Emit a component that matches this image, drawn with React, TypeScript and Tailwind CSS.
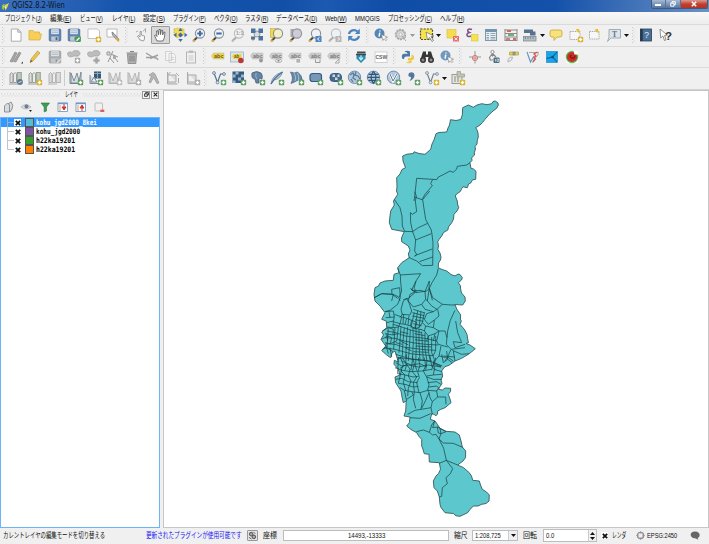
import React, { useLayoutEffect, useRef, useState } from 'react';

/* Text squeezed or stretched to the width of its box */
function Fit({ className, children }: { className: string; children: React.ReactNode }) {
  const box = useRef<HTMLSpanElement>(null);
  const inner = useRef<HTMLSpanElement>(null);
  const [k, setK] = useState(1);
  useLayoutEffect(() => {
    if (box.current && inner.current && inner.current.offsetWidth) {
      setK(box.current.getBoundingClientRect().width / inner.current.offsetWidth);
    }
  }, []);
  return (
    <span ref={box} className={`block shrink-0 whitespace-nowrap ${className}`}>
      <span ref={inner} className="inline-block origin-left" style={{ transform: `scaleX(${k})` }}>
        {children}
      </span>
    </span>
  );
}

const Plus = ({ c = '#5a9c5f', x = 12.5, y = 12.5 }: { c?: string; x?: number; y?: number }) => (
  <g>
    <rect x={x - 2.7} y={y - 2.7} width="5.4" height="5.4" rx="1" fill={c} />
    <path d={`M${x - 1.7} ${y}h3.4M${x} ${y - 1.7}v3.4`} stroke="#fff" strokeWidth="1.3" />
  </g>
);
const YPlus = () => <Plus c="#d9b32c" />;
const Lens = ({ fill = '#eef2f6', stroke = '#8b8f94', handle = '#4a4a48', tip = '#e0a93a' }) => (
  <g>
    <path d="M6 10.5L2.4 14" stroke={handle} strokeWidth="2" />
    <path d="M3.6 12.8L1.8 14.5" stroke={tip} strokeWidth="1.8" />
    <circle cx="9" cy="6.5" r="4.6" fill={fill} stroke={stroke} strokeWidth="1.1" />
  </g>
);
const Floppy = ({ a = '#5c84b4', b = '#47698f' }) => (
  <g>
    <rect x="2.2" y="2" width="11.6" height="12" rx="1" fill={a} stroke={b} strokeWidth=".7" />
    <rect x="4.2" y="2.2" width="7.6" height="5" fill="#dce4ec" />
    <path d="M5 3.8h6M5 5.5h6" stroke="#93a8bd" strokeWidth=".6" />
    <rect x="4.2" y="9.4" width="7.4" height="4.4" fill="#c2c7cb" />
    <rect x="8.6" y="10.2" width="1.8" height="3" fill={b} />
  </g>
);
const Blob = () => <path d="M2 6.500c-1.500-3 1-4.500 4-3c1-1.500 2-2 5-1.800c3.500 .3 4 4 1 5.300c-2 .6-3-.4-4 0s-4 2-6-.5z" fill="#bdbdbd" stroke="#a2a2a2" strokeWidth=".8" />;
const Tag = ({ fill = '#cdcdcd', ink = '#777', children }: { fill?: string; ink?: string; children?: React.ReactNode }) => (
  <g>
    <path d="M1.500 7l2-3h10.500v6H3.500z" fill={fill} stroke="#b5b5b5" strokeWidth=".5" />
    <text x="4" y="9" fontSize="5.5" fontWeight="bold" fill={ink} fontFamily="Liberation Sans, sans-serif">abc</text>
    {children}
  </g>
);
const Globe = ({ inner }: { inner?: React.ReactNode }) => (
  <g>
    <circle cx="7.5" cy="7.300" r="6.200" fill="#b4c8da" stroke="#6487a8" strokeWidth=".9" />
    {inner}
    <Plus />
  </g>
);
const Books = ({ c = '#9a9f9a', f = '#bccabb' }) => (
  <g stroke={c} strokeWidth="1">
    <path d="M2 4l1.500-1.500l1.500 1.500v8.500h-3z" fill="#ddd" />
    <path d="M5.600 4l1.400-1.500l1.500 1.500v8.500h-3z" fill="#eee" />
    <rect x="9.300" y="2.500" width="4" height="10" fill={f} />
    <path d="M1 14h9" />
  </g>
);
const Vee = ({ c = '#50718f' }: { c?: string }) => (
  <g>
    <path d="M3 3l3.500 9.500l3-8.500h4" fill="none" stroke={c} strokeWidth="1.200" />
    <circle cx="3" cy="3" r="1.400" fill="#eee" stroke={c} strokeWidth=".8" />
    <circle cx="6.500" cy="12.500" r="1.400" fill="#eee" stroke={c} strokeWidth=".8" />
    <circle cx="13" cy="4" r="1.400" fill="#eee" stroke={c} strokeWidth=".8" />
  </g>
);
const Mesh = ({ c = '#a8a8a8', f = '#ddd' }) => (
  <g>
    <path d="M2 2v11.500h11" fill="none" stroke={c} strokeWidth="1" />
    <path d="M3 3l3 8l3-8l2 8l2-9v11H3z" fill={f} stroke={c} strokeWidth=".9" />
  </g>
);
const Info = ({ c = '#5587b6' }) => (
  <g>
    <circle cx="6.500" cy="6.500" r="5" fill={c} />
    <path d="M6.800 5.600l-.7 4M6.900 3.400v1.200" stroke="#fff" strokeWidth="1.500" />
    <path d="M8.500 7.500l1.300 6l1.300-1.800l1.800 2l1-1l-1.700-1.800l2.300-.7z" fill="#fff" stroke="#777" strokeWidth=".6" />
  </g>
);
const Gear = ({ c = '#aaa' }) => (
  <g>
    <circle cx="7.500" cy="7.500" r="4.900" fill="#ddd" stroke={c} strokeWidth="1.600" strokeDasharray="2.2 .8" />
    <circle cx="7.500" cy="7.500" r="4" fill="none" stroke={c} strokeWidth=".8" />
    <circle cx="7.500" cy="7.500" r="1.700" fill="#f4f4f4" stroke={c} strokeWidth=".8" />
  </g>
);

const icons: Record<string, React.ReactNode> = {
  new: <path d="M3.300 2h6.500l3.200 3.200v9H3.300zM9.800 2v3.200H13" fill="#fff" stroke="#8e8e8e" strokeWidth=".7" />,
  open: <path d="M2 13V3.500h4l1 1.500h5.500v2h2l-1.500 6z" fill="#f6cf57" stroke="#d9a93a" strokeWidth=".7" />,
  save: <Floppy />,
  saveAs: <g><Floppy /><rect x="9.300" y="9.300" width="5.600" height="5.600" rx="1" fill="#4d9b5e" /><path d="M10.500 13.800l3-3" stroke="#fff" strokeWidth="1.300" /></g>,
  composer: <g><path d="M2 2h9.500l2 2v7.500H2z" fill="#fff" stroke="#aaa" strokeWidth=".7" /><YPlus /></g>,
  manager: <g><path d="M2 2h10v8H2z" fill="#fff" stroke="#aaa" strokeWidth=".8" /><path d="M7 5l.5 3l5 5.500l1.500-1l-5-6z" fill="#b8b8b8" stroke="#666" strokeWidth=".7" /><path d="M11 11.500l3 2.800" stroke="#dfb032" strokeWidth="1.800" /></g>,
  touch: <g><path d="M7 13L4.500 9l1-.5L7 10V4.500h1.300V8l3.200 1v3l-1 2z" fill="#f6f6f6" stroke="#8c8c8c" strokeWidth=".8" /><path d="M10 4.500l2.500-3v4M3 5l2-1" stroke="#999" strokeWidth=".8" fill="none" /></g>,
  hand: <path d="M5 14L2.500 8.500l1.200-.6L5 9.500L4.500 4l1.300-.3l.8 4L7 2.500h1.400L8.500 7.500l.9-4.300h1.300L10.600 8l1.200-2.800h1.200l-.6 5.500L11 14z" fill="#fff" stroke="#555" strokeWidth=".8" />,
  panSel: <g><path d="M2 2l4-1l6 1v6l-7 3l-3-3z" fill="#f4dc55" stroke="#b5a13d" strokeWidth=".7" strokeDasharray="1.500 1" /><g fill="#416ba0"><path d="M8.500 1l2.200 3H6.300zM8.500 15l2.200-3H6.300zM1.500 8l3-2.200v4.400zM15.500 8l-3-2.200v4.400z" /><path d="M8.500 5.500l2.500 2.500l-2.500 2.500l-2.500-2.500z" /></g></g>,
  zoomIn: <g><Lens /><path d="M9 3.800v5.400M6.300 6.500h5.400" stroke="#3f6fa8" strokeWidth="2" /></g>,
  zoomOut: <g><Lens /><path d="M6.300 6.500h5.400" stroke="#3f6fa8" strokeWidth="2" /></g>,
  zoomNative: <g><Lens stroke="#bbb" handle="#aaa" tip="#bbb" /><text x="6" y="8.300" fontSize="5" fontWeight="bold" fill="#999" fontFamily="Liberation Sans, sans-serif">1:1</text></g>,
  zoomFull: <g><circle cx="8" cy="7" r="3" fill="#d7dce0" stroke="#999" /><path d="M6 10l-2.500 3.500" stroke="#d8a43a" strokeWidth="1.500" /><g fill="#4b739f"><rect x="2" y="1.500" width="4.500" height="4.500" /><rect x="9.500" y="1.500" width="4.500" height="4.500" /><rect x="2" y="9.500" width="4" height="3" /><rect x="9.500" y="9" width="4.500" height="4.500" /></g></g>,
  zoomSel: <g><rect x="1.500" y="1.500" width="7" height="9" fill="#f2da4a" stroke="#b19d38" strokeWidth=".5" /><Lens fill="#f3efc7" /></g>,
  zoomLayer: <g><rect x="2.500" y="2" width="10" height="8" fill="#a9a9ad" /><Lens fill="#d0cad6" stroke="#929299" /></g>,
  zoomLast: <g><Lens /><rect x="8.500" y="9" width="6" height="6" fill="#4f83bd" /><path d="M12.500 10.300L10.500 12l2 1.700" fill="none" stroke="#fff" /></g>,
  zoomNext: <g><Lens stroke="#bbb" handle="#aaa" tip="#bbb" /><rect x="8.500" y="9" width="6" height="6" fill="#b5b5b5" /><path d="M10.700 10.300L12.700 12l-2 1.700" fill="none" stroke="#fff" /></g>,
  refresh: <g fill="none" stroke="#4d84bf" strokeWidth="2.200"><path d="M3 7a5 4.500 0 0 1 8.500-2.500M13 9a5 4.500 0 0 1-8.500 2.500" /><path d="M13.800 1.500v5.500H9zM2.200 14.500V9H7z" fill="#4d84bf" stroke="none" /></g>,
  info: <Info />,
  infoFaint: <Info c="#6f99bf" />,
  action: <g><Gear /><path d="M9 9l4 5M10 12l3-2" stroke="#aaa" strokeWidth="1" /></g>,
  select: <g><rect x="1.500" y="2" width="12" height="10.500" fill="#f8e34d" stroke="#4e4a30" strokeWidth="1.200" strokeDasharray="2 1.200" /><path d="M7 5l1.500 8l2-2.500l2.500 4l1.500-1l-2.500-3.800l2.800-.7z" fill="#f5f5f5" stroke="#555" strokeWidth=".6" /></g>,
  deselect: <g><rect x="2" y="2.500" width="9" height="8.500" fill="#f6dd4e" stroke="#d8bd46" strokeWidth=".6" /><rect x="8" y="9" width="6" height="5.500" fill="#e96a66" /><path d="M9.500 10.300l3 3M12.500 10.300l-3 3" stroke="#fff" /></g>,
  expr: <g><path d="M8 2.500c-4-1.500-6 1.300-2.500 3c-4.500 1-2.500 5.500 1.500 3.500" fill="none" stroke="#7d5386" strokeWidth="1.500" /><rect x="7.500" y="7.500" width="6.500" height="6.500" fill="#f6e345" stroke="#d0bd3f" strokeWidth=".5" /></g>,
  table: <g><rect x="2.500" y="2.500" width="11" height="11" fill="#e9eef2" stroke="#7f99af" /><rect x="2.500" y="2.500" width="11" height="2.500" fill="#7594ae" /><path d="M3.500 6.500h2.500M3.500 8.500h2.500M3.500 10.500h2.500M3.500 12h2.500M7.500 6.500h5M7.500 8.500h5M7.500 10.500h5M7.500 12h5" stroke="#8fa6b9" /></g>,
  calc: <g><path d="M2 2v12M14 2v12M2 3h12M2 6.500h12M2 10h12M2 13.500h12" stroke="#8b8b8b" /><path d="M4 4h4M10 12h3" stroke="#d46a65" strokeWidth="2" /><path d="M5 8h6" stroke="#79ad72" strokeWidth="2" /><path d="M3 12h4" stroke="#d3807a" strokeWidth="2" /></g>,
  measure: <g><path d="M2 2.500h9v2h2.500v4H8V6H2z" fill="#56738d" /><rect x="1.500" y="9.500" width="12.500" height="4.500" fill="#b4bdc3" stroke="#7f8c95" strokeWidth=".8" /><path d="M3.500 10v2M6 10v2M8.500 10v2M11 10v2" stroke="#6b7780" strokeWidth=".7" /></g>,
  tips: <path d="M4 3h8q2 0 2 2v3q0 2-2 2H9l-3 3.500v-3.500H4q-2 0-2-2V5q0-2 2-2z" fill="#f8e27a" stroke="#cda945" strokeWidth=".9" />,
  bmNew: <g><path d="M2 4.500h10v8H2z" fill="#f7f7f7" stroke="#999" strokeWidth=".8" strokeDasharray="1.500 .8" /><path d="M8 2h3l1 4l-3-1z" fill="#e6c039" /><YPlus /></g>,
  bm: <g><path d="M2.500 4.500h9.500v7.500h-9.500z" fill="#f7f7f7" stroke="#999" strokeWidth=".8" strokeDasharray="1.500 .8" /><path d="M8 2h3l1 4l-3-1z" fill="#e6c039" /></g>,
  annot: <g><path d="M3 2.500h11.500v8.500H5l-3.500 3.500L3 10z" fill="#dde5ea" stroke="#8ca0af" strokeWidth=".8" /><text x="6" y="9.500" fontSize="7.500" fontWeight="bold" fill="#68747c" fontFamily="Liberation Serif, serif">T</text></g>,
  help: <g><rect x="2.500" y="2" width="11" height="12" fill="#496f98" stroke="#263f59" strokeWidth=".8" /><path d="M3.500 2v12" stroke="#27374b" strokeWidth="2.500" /><text x="6.300" y="11.300" fontSize="8.500" fill="#e8eef5" fontFamily="Liberation Sans, sans-serif">?</text></g>,
  whats: <g><path d="M2 2l.7 9l2.200-2l1.600 4.500l1.500-.6L6.500 8.500l2.800-.4z" fill="#fff" stroke="#666" strokeWidth=".7" /><text x="7" y="13" fontSize="11.500" fontWeight="bold" fill="#333" fontFamily="Liberation Sans, sans-serif">?</text></g>,

  edits: <g><path d="M2 12.500L7 3l2 1L4.500 13zM5.500 12.500L11 3l2 1L8 13z" fill="#a4a4a4" stroke="#858585" strokeWidth=".6" /><path d="M13 14.500h2v-2z" fill="#333" /></g>,
  pencil: <g><path d="M3 13.500l1-3.500l6.500-8l2.500 2L6 12z" fill="#e8c64c" stroke="#a68e3c" strokeWidth=".6" /><path d="M3 13.800l1-2.800l1.500 1z" fill="#555" /></g>,
  saveOff: <g><Floppy a="#ababab" b="#9a9a9a" /><path d="M10 14l4-4" stroke="#ddd" strokeWidth="1.500" /></g>,
  addF: <g><Blob /><Plus c="#a9a9a9" x={11.500} y={11.500} /></g>,
  moveF: <g><Blob /><path d="M9 8h3v2h2v3h-2v2H9v-2H7v-3h2z" fill="#a6a6a6" stroke="#eee" strokeWidth=".7" /></g>,
  node: <g><path d="M2 3h3v3H2zM8 2l-5 11M6 5l7 3M8 6l5 7M5 9l4 5" stroke="#999" fill="#ddd" /><path d="M8 7h3v3H8z" fill="#aaa" /></g>,
  trash: <g><path d="M3.500 5h9l-.7 9.500H4.200z" fill="#b3b3b3" stroke="#888" strokeWidth=".9" /><path d="M2.500 4h11M6 2.500h4M6 6.500v6M8 6.500v6M10 6.500v6" stroke="#838383" strokeWidth="1.100" fill="none" /></g>,
  cut: <path d="M2 4l8 5M14 6L6 9.500M2 8.500h6M10 8.500q3 0 4 2.500" stroke="#a0a0a0" strokeWidth="1.400" fill="none" />,
  copy: <path d="M2.500 2.500h6v9h-6zM6 4.500h4.500l2 2V13.500H6zM7.500 8.500h3.500M7.500 10.500h3.500" fill="#f3f3f3" stroke="#c9c9c9" strokeWidth=".8" />,
  paste: <g><rect x="3.500" y="3" width="9" height="11" fill="#f0f0f0" stroke="#b5b5b5" /><rect x="6" y="1.500" width="4" height="2.500" fill="#bbb" /><path d="M5.500 7h5M5.500 9h5M5.500 11h5" stroke="#ccc" /></g>,
  abcY: <Tag fill="#f0d442" ink="#6b5d25" />,
  abcPic: <g><rect x="1.500" y="3" width="13" height="10" fill="#dbe5ef" stroke="#92a9be" strokeWidth=".7" /><path d="M3 7.500l1.500-2.500h8v5h-8z" fill="#f0d442" /><text x="5" y="9" fontSize="4.500" fontWeight="bold" fill="#6b5d25" fontFamily="Liberation Sans, sans-serif">ab</text><circle cx="11.800" cy="11.500" r="2.700" fill="#bf3435" /></g>,
  abcPin: <Tag><circle cx="12" cy="11.500" r="2" fill="#999" /></Tag>,
  abcEye: <Tag><ellipse cx="10.500" cy="11.800" rx="3.300" ry="1.700" fill="#eee" stroke="#999" strokeWidth=".7" /><circle cx="10.500" cy="11.800" r="1" fill="#888" /></Tag>,
  abcMove: <Tag><rect x="9" y="9.500" width="4.500" height="4.500" fill="#b3b3b3" stroke="#fff" strokeWidth=".6" /></Tag>,
  abcRot: <Tag><path d="M8.500 10.500v3h4.500v-3" fill="#eee" stroke="#999" /></Tag>,
  abcEdit: <Tag><path d="M9 14l4-4v4z" fill="#eee" stroke="#aaa" /></Tag>,
  gps: <g><path d="M4 2.500h8.500v2H4z" fill="#444b50" /><path d="M3.500 5.500h9v4l-4.500 4.500l-4.500-4.500z" fill="#2c88ac" /><path d="M8 6v5M6 8.500L8 11l2-2.500" fill="none" stroke="#b4edf7" strokeWidth="1.300" /><path d="M3 5.500h10" stroke="#3c464c" strokeWidth="1.500" /></g>,
  csw: <g><rect x="2" y="3" width="12" height="10.500" fill="#fff" stroke="#c5c5c5" strokeWidth=".8" /><text x="2.500" y="9.500" fontSize="5" fontWeight="bold" fill="#666" fontFamily="Liberation Sans, sans-serif">CSW</text></g>,
  python: <g><path d="M4.500 2.500q3-1.500 5.500 0v5H6Q4 7.500 4 10H2.500Q.5 5.500 4 4.800H8" fill="#497ba5" /><path d="M6 13.500q3 1.300 6 0l-1-2H8v-2.500h3q1-1 .500-3.500q3 .5 2.500 4q-.5 2-3 2" fill="#efca45" /><circle cx="6.200" cy="3.800" r=".6" fill="#fff" /></g>,
  binoc: <g fill="#343738"><path d="M4 2.500h3v3h2v-3h3l2.500 8h-5V8h-3v2.500H1.500z" /><circle cx="4" cy="11" r="3" /><circle cx="12" cy="11" r="3" /><circle cx="4" cy="11" r="1.500" fill="#9b8480" /><circle cx="12" cy="11" r="1.500" fill="#a58a83" /></g>,
  cross: <g><path d="M8 2v12.500M2 8h12" stroke="#999" /><circle cx="8" cy="9" r="2.600" fill="#f4dddd" stroke="#c77d78" /><path d="M8 6.400v5.200M5.400 9h5.200" stroke="#d08c87" /></g>,
  person: <g><circle cx="6.500" cy="3" r="1.600" fill="#fff" stroke="#777" strokeWidth=".8" /><path d="M6.500 4.500v3M6 5L3.500 8.500l1 3M7 5l3 3M5 11h2" stroke="#888" strokeWidth="1.200" fill="none" /><rect x="7.500" y="8.500" width="6" height="5.500" rx="1" fill="#4b6d82" /><path d="M9.500 10v2.500M11 10h1.500v2.500H11z" stroke="#dee8ee" strokeWidth=".7" fill="none" /></g>,
  sat: <g><path d="M4.500 3h3.500v3H4.500zM10 3h3.500v3H10z" fill="#e3d44c" stroke="#9a954c" strokeWidth=".6" /><rect x="7.800" y="2.500" width="2.400" height="4" fill="#8f938c" /><path d="M3 13q-.5-5 4.500-5q.5 3.500-4.500 5z" fill="#eee" stroke="#999" strokeWidth=".7" /></g>,
  vy: <g fill="none"><path d="M2 3l3.500 10L9 7" stroke="#6c98c0" strokeWidth="1.200" /><path d="M4 3.500h9.500q0 4-4 5.500l-2 4.500" stroke="#a7a7a7" /><path d="M12.500 3l-3.500 2l2 2l-2 1.500l1.500 1.500l-2.500 3" stroke="#db5252" strokeWidth="1.200" /></g>,
  blue: <g><rect x="2.500" y="2.500" width="11" height="11" fill="#16a6ef" stroke="#1881b7" strokeWidth=".6" /><path d="M13 3L8.500 8l-6 1.500M8.500 8l4.500 5" stroke="#145c82" strokeWidth="1.100" fill="none" /><circle cx="8.500" cy="8" r="1.300" fill="#124f70" /></g>,
  spiral: <g><rect x="2" y="2" width="12" height="12" fill="#fff" /><circle cx="8" cy="8" r="6.200" fill="#55c557" /><circle cx="8" cy="8" r="5.100" fill="#d12b29" /><path d="M7.500 6q-2.500 1.500 0 3q3.500 .5 3.500-2.500" fill="none" stroke="#74201a" strokeWidth="1.400" /><path d="M9.500 2l1 3.500h3.500V2z" fill="#fff" /></g>,

  lib1: <g><Books /><circle cx="12" cy="12" r="2.900" fill="#597a8e" /><path d="M10.500 12.500l3-1" stroke="#dee6ea" /></g>,
  lib2: <g><Books /><YPlus /></g>,
  lib3: <Books c="#b3b3b3" f="#ddd" />,
  meshG: <g><Mesh c="#74838e" f="#d3dce2" /><Plus /></g>,
  meshB: <g><rect x="6" y="1.500" width="7" height="7" fill="#35597b" /><path d="M6 3.500h7M9.500 1.500v7" stroke="#87a3b8" /><path d="M2 5v8.500h8M3 12l3-5l3 5z" fill="#ccd6de" stroke="#7c8b96" /><Plus /></g>,
  mesh1: <g><Mesh c="#b3b3b3" /><Plus c="#bcbcbc" /></g>,
  mesh2: <g><Mesh c="#b3b3b3" /><Plus c="#adadad" /></g>,
  tools: <path d="M3 5l4-2.500l2 1.500l4 9l-2 .5l-3.500-6l-3 5.500L3 12l2.500-6z" fill="#b5b5b5" stroke="#9c9c9c" strokeWidth=".8" />,
  mesh3: <g><path d="M2.500 2v12h10M3 12V5h8v7z" fill="#ddd" stroke="#ababab" /><path d="M2.500 5l3-3M11 3l3 3M13.500 8v5" stroke="#aaa" /></g>,
  mesh4: <g><path d="M2.500 2v12h10M3 12V5h8v7z" fill="#ddd" stroke="#ababab" /><Plus c="#aaa" /></g>,
  vect: <g><Vee /><Plus c="#5ba266" /></g>,
  rast: <g><rect x="1.500" y="1.500" width="11.500" height="11.500" fill="#33597e" /><path d="M4.500 1.500h3v3h-3zM10 4.500h3v3h-3zM1.500 4.500h3v3h-3zM7 7.500h3v3H7zM1.500 10.500h3v2.500h-3z" fill="#9cb5ca" /><Plus /></g>,
  pg: <g><path d="M2 3q5-3 9 0q2 2 1 6l-3-1v5H6l-1-4q-4 0-3-6z" fill="#6484a3" stroke="#44627f" strokeWidth=".8" /><path d="M6 3q-1 4 1 6" stroke="#b3c3d1" fill="none" strokeWidth=".7" /><Plus /></g>,
  feather: <g><path d="M2 14Q3 5 13.500 2q-2 7-8.500 8z" fill="#b8c9d7" stroke="#6b8ba6" strokeWidth=".8" /><path d="M2 14Q6 7 13.500 2" stroke="#4d7393" strokeWidth="1.300" fill="none" /><Plus /></g>,
  mssql: <g><path d="M1.500 2q4 2 7 0q4.500 3 5 9q-4-3-6 0l-5.500 2.500q3-5.500-.5-11.500z" fill="#6587a6" stroke="#496d8c" strokeWidth=".8" /><path d="M5 3q3 4 1 8M8.500 3q2 4 1 7" stroke="#bdccd9" strokeWidth=".8" fill="none" /><Plus /></g>,
  ora: <g><rect x="2" y="3.500" width="11.500" height="8" rx="2.500" fill="#7897b9" stroke="#345d83" strokeWidth="1.200" /><Plus /></g>,
  ora2: <g><rect x="2" y="3.500" width="11.500" height="8" rx="3.500" fill="#49698a" stroke="#345d83" /><path d="M4.500 4.500h2.500v2.500H4.500zM9.500 4.500h2v2.500h-2zM7 7.500h2.500v2.500H7z" fill="#ccd9e3" /><Plus /></g>,
  wms: <Globe inner={<path d="M3 5l3-2l1 2l-1 3l3 2M9 2l-1 3l3 1l2 3M4 9l2 3" fill="none" stroke="#557b9f" strokeWidth="1.300" />} />,
  wcs: <Globe inner={<path d="M1.500 7.300h12M2.500 4.300h10M2.500 10.300h10M7.500 1.300q-5 6 0 12q5-6 0-12" fill="none" stroke="#2f5678" strokeWidth="1.200" />} />,
  wfs: <Globe inner={<g fill="none"><path d="M4 4l3 7l4-7" stroke="#fff" strokeWidth="2.400" /><path d="M4 4l3 7l4-7" stroke="#587793" strokeWidth="1" /></g>} />,
  comma: <g><path d="M4 3q5-2 5.500 2q0 4-5 6q2-3 1.500-4q-4 0-2-4z" fill="#54789b" /><Plus /></g>,
  vect2: <g><Vee c="#708496" /><YPlus /></g>,
  box: <g><rect x="2" y="4.500" width="10" height="9" fill="#e5e5df" stroke="#999b92" /><path d="M5 6v6M8 6v6" stroke="#a5ada1" strokeWidth="1.500" /><path d="M7 1.500h3.500v2.500h4V7H7z" fill="#bfc5b3" stroke="#989b90" strokeWidth=".7" /><YPlus /></g>,

  pAdd: <path d="M3.500 7l3-3l2 2v7h-5zM7 5l3-2q3 3 1 7l-2 3" fill="#d7dce0" stroke="#84898d" strokeWidth=".9" />,
  eye: <g><path d="M2 8q5-5 10 0q-5 4-10 0z" fill="#ddd" stroke="#aaa" strokeWidth=".7" /><circle cx="7.500" cy="7.500" r="2" fill="#64809c" /><path d="M10 11h3l-1.500 2z" fill="#222" /></g>,
  funnel: <path d="M4 4h8.500L9.500 8v4l-2.300 1V8z" fill="#3e9c53" stroke="#2d7440" strokeWidth=".6" />,
  expand: <g><rect x="3" y="4" width="9.500" height="8.500" fill="#fff" stroke="#668fc5" strokeWidth=".8" /><path d="M3 4.500h9.500" stroke="#7199cc" strokeWidth="1.500" /><path d="M4 7h2M4 9h2M4 11h2" stroke="#e89354" /><path d="M9 5v4M7 8h4l-2 3z" fill="#ce382d" stroke="#ce382d" /></g>,
  collapse: <g><rect x="3" y="4" width="9.500" height="8.500" fill="#fff" stroke="#668fc5" strokeWidth=".8" /><path d="M3 4.500h9.500" stroke="#7199cc" strokeWidth="1.500" /><path d="M4 7h2M4 9h2M4 11h2" stroke="#e89354" /><path d="M9 12V8M7 9h4l-2-3z" fill="#ce382d" stroke="#ce382d" /></g>,
  remove: <g><rect x="4" y="4" width="7.500" height="8" rx=".6" fill="#f0f0f0" stroke="#b0b0b0" strokeWidth=".8" /><path d="M9.300 11.800h4" stroke="#df5c56" strokeWidth="2.300" /></g>,
};

const Svg = ({ n }: { n: string }) => (
  <svg viewBox="0 0 16 16" className="block size-4 shrink-0 overflow-visible">{icons[n]}</svg>
);
const Ic = ({ n, down }: { n: string; down?: boolean }) => (
  <span className={down ? 'flex h-[18px] w-[19.4px] shrink-0 items-center justify-center rounded-[1px] border border-[#9a9a9a] bg-[#d9d9d9]' : 'flex h-[18px] w-[19.4px] shrink-0 items-center justify-center'}>
    <Svg n={n} />
  </span>
);
const Row = ({ list }: { list: string }) => <>{list.split(' ').map((n) => <Ic key={n} n={n} down={n === 'hand'} />)}</>;
const Grip = ({ className }: { className: string }) => (
  <span className={`flex h-[17px] shrink-0 justify-center ${className}`}>
    <svg className="block h-[17px] w-[3px]" viewBox="0 0 3 17">
      <path d="M.5 0v17" stroke="#c9c9c9" strokeDasharray="1 2" />
      <path d="M2 1.500v15" stroke="#d0d0d0" strokeDasharray="1 2" />
    </svg>
  </span>
);
const Arrow = ({ faint }: { faint?: boolean }) => (
  <span className="flex w-[6.6px] shrink-0 items-center">
    <svg viewBox="0 0 5 3" className="h-[3px] w-[5px]"><path d="M0 0h5L2.500 3z" fill={faint ? '#999' : '#111'} /></svg>
  </span>
);

const menus: [string, string, string][] = [
  ['プロジェクト', 'J', 'w-[37px] mr-[8px]'],
  ['編集', 'E', 'w-[21.5px] mr-[8.5px]'],
  ['ビュー', 'V', 'w-[23px] mr-[9px]'],
  ['レイヤ', 'L', 'w-[23px] mr-[8px]'],
  ['設定', 'S', 'w-[22px] mr-[8px]'],
  ['プラグイン', 'P', 'w-[33px] mr-[8px]'],
  ['ベクタ', 'O', 'w-[23.5px] mr-[7.5px]'],
  ['ラスタ', 'R', 'w-[23.5px] mr-[7.5px]'],
  ['データベース', 'D', 'w-[41px] mr-[8px]'],
  ['Web', 'W', 'w-[21.5px] mr-[8.5px]'],
  ['MMQGIS', '', 'w-[24.5px] mr-[8px]'],
  ['プロセッシング', 'C', 'w-[44px] mr-[8.5px]'],
  ['ヘルプ', 'H', 'w-[24.5px]'],
];

const layers = [
  { name: 'kohu_jgd2000_8kei', box: 'w-[61px]', color: 'bg-[#54bcdb]', on: true },
  { name: 'kohu_jgd2000', box: 'w-[44px]', color: 'bg-[#7d55a3]', on: false },
  { name: 'h22ka19201', box: 'w-[39px]', color: 'bg-[#33a02c]', on: false },
  { name: 'h22ka19201', box: 'w-[39px]', color: 'bg-[#ff7f00]', on: false },
];

const Check = () => (
  <span className="flex size-[7px] shrink-0 items-center justify-center bg-white">
    <svg viewBox="0 0 6 6" className="size-[6px]"><path d="M.8 .8l4.400 4.400M5.200 .8L.8 5.200" stroke="#111" strokeWidth="1.800" /></svg>
  </span>
);

const outline =
  'M495.3 100L498 102L498.300 104L496.700 107.300L493 110L490 112.700L487 116L485 118.300L482.500 121.500L480 124L475.700 126.700L477 129L478 132L478.300 136L477.300 139.300L477 143L475 145.500L475.500 148L474.300 151.700L474.500 154L471.700 156.700L472 159.500L470 161.700L470.500 165L471 167.300L473.500 168L476 170.300L475.700 178.300L472.500 178.800L471 181.700L468.500 183L467.300 186.700L463 185.800L461.700 187.500L460.300 190.500L456.500 193L455.300 195L457.300 200L457.500 203L458.700 206.700L457 210L454 213.300L453.500 218L451.700 221.700L448.500 226L447.800 229L443.500 231.500L441.700 235L439 238.500L437.700 240.700L438.500 245L437.800 248.300L440 252L441 256L440.500 259L438.500 262L438.300 266.700L442 268.500L446.700 270L451 273.500L455 275L458 273L460 273.500L462.300 276.700L461.500 279L458.300 281.700L460.300 284.500L460.700 288.300L461.500 292L465 296L465.300 300L462.700 304L455 303.500L456.700 308L460.700 314L460.300 318L461.300 320L460 323.300L464.300 328.300L467 333.500L467.700 338L468.500 341.700L466 342.500L470 344L475.300 347.700L472 350.500L468.300 353.300L461.700 357.300L455 360L449 364.300L445 365.700L443 368L441.700 370L442.700 375L441 379L442 382.500L438.300 388.300L442.300 389L445 387L450.700 387.300L450.500 390.500L448.300 393.300L450 398L451 401.700L445 406.700L440.500 408.500L437.700 410L437.500 413L435.700 415L434.500 413.500L431.700 412.700L430.300 418.300L435 420L437.500 423.500L440 427.300L446 430.300L455 431L459.300 434L461 440L462.300 446L465.700 450L465.500 456.700L463 460L457.700 464L463.300 466.500L469.300 471.700L471.500 475L472.700 479.300L479.300 480L480.500 484L482.300 488.300L486.500 491L489.300 494L489 500L486 502.500L481.700 503.300L478 505L473.300 505L470 508.500L467.700 511.700L460 515.300L456 514.800L453.300 512.500L445 511.700L441 506.500L440 503.300L439.300 496L437.300 490L434 486.700L433.300 480L436 475L438.500 472.500L440.500 468.300L439.300 461.700L429.300 461L429 453.300L424.300 452.700L422.500 447L421.700 445L421.700 438.300L419 435.500L416.700 431.700L411 428.500L406.700 425L409.300 421.700L410 416L404 415L405.700 410L406.200 400L403.300 401.700L402 396L401 390L395.700 381.700L395 376L400 374L398.300 368.300L394 363.300L394.300 359.300L398.300 361L396.500 355L395 350L392 352L390.700 356.700L386.700 354L381.700 349.500L385.700 345L381 338.300L383.500 334L381.700 331L386.700 326.700L386.300 320L381.700 318.300L385 311.700L380 305L375 300L374 293.300L375 286.700L378.500 285L380 282L385 280L393.300 279.300L394 273.300L399 271.700L397.700 266.700L401.700 261.700L409.300 256.700L408.300 253L410 249L408.300 245L401.700 240.700L401.500 237L402.700 234L404.300 230.700L391.700 228.300L389.300 221.700L390 215L390.700 210L394.300 204L393.500 200L397.700 193.300L396.500 190L397 186L396.700 176.700L400 173L402 168.500L405.500 166.700L403 160L402.700 155L407 153.200L413.300 152.500L414 150.800L419 152.500L425 153.300L430.700 148.300L432 143L434 139L436 132.700L439 131.500L446.700 131L448 127L449.500 124L450.500 118.700L456 119.500L460.700 118.500L462.300 114L462.700 106.700L468.300 104L473.300 106.300L477 104L481.700 102.700L487 103.700L491.700 102.700L493 100.500Z';

/* Ward boundaries: each sheet is drawn at three units to the pixel */
const sheets: { at: string; d: string }[] = [
  { at: 'translate(370 90) scale(.33333)', d: 'M300 215L290 222L262 226L260 234L250 244L240 240L218 252L205 258L200 266L188 265L140 262L134 318L132 330M188 265L182 278L187 284L165 310L156 326L134 318' },
  { at: 'translate(370 190) scale(.33333)', d: 'M73 25L90 50L96 75L97 105L104 121L128 122L122 95L121 65L127 70L140 62L136 30L139 15L134 2M158 26L163 60L167 85L173 97L184 117L186 130L189 155L188 223L157 224L140 210L116 199M128 122L145 110L173 97M128 122L137 147L184 128M137 147L134 180L140 190L134 197M134 194L187 174M148 212L188 198M205 232L200 252L186 275L178 292M83 232L91 252L152 248L138 270L132 293L140 300L130 300L122 293L138 305L170 300L178 292L172 330M91 252L92 275L95 300L88 318M13 320L35 308L70 310L86 318L90 330M70 310L65 330M100 326L115 322L135 305M178 292L187 328M158 26L179 0' },
  { at: 'translate(365 280) scale(.33333)', d: 'M28 50L50 38L81 40L80 25L104 20M104 20L106 50L98 70L75 88L60 92M81 40L98 52M153 0L140 27L150 30L165 28L180 32L193 0L192 20L203 50L232 70L260 72L270 72M180 32L182 55L170 70L145 78L130 60L135 40L152 32M183 55L200 75L216 85L205 92L180 85L170 70M115 60L108 85L112 100L105 110M115 60L125 52L133 68L140 90L135 102L110 100M205 92L185 98L178 115L190 130L208 117L222 105L218 85M208 117L205 140L222 150L240 150L246 170L244 190M232 70L216 85M270 88L256 118L248 150L246 170M272 120L278 155L290 185L265 182L270 200L300 190M258 205L300 200M244 190L258 205L248 228L240 240M262 208L290 220L312 218M248 228L265 240M220 190L248 198M228 195L222 225L245 230M222 225L205 245L232 255M60 92L85 90L88 108L62 110M72 92L75 110M88 100L110 108L105 128L85 122L88 108M65 125L85 120L84 140L66 138M52 150L70 140L85 145L84 162L60 158M50 175L68 165L80 170L76 188L60 185M65 158L68 180M84 140L100 138L105 128M100 138L98 158L84 162M98 158L95 180L76 188M110 108L125 112L120 130L105 128M125 112L140 118L136 135L120 130M140 118L155 124L151 142L136 135M116 100L114 128M132 104L129 132M148 95L142 120L138 140M158 90L150 142M168 92L162 140L150 142M178 95L172 125L162 140M145 85L180 96M142 95L178 104M142 105L178 112M150 116L175 121M145 128L170 134M140 140L170 146M172 125L182 135L178 150L168 145M182 135L205 140M178 150L190 165L210 158L222 150M190 165L185 180M210 158L205 180M222 150L215 180L220 190' },
  { at: 'translate(365 280) scale(.33333)', d: 'M66 150L92 155L120 165L145 168L180 172L215 180M60 170L90 172L118 180L148 186L182 190L220 192M62 188L90 190L115 198L145 202L180 206L212 208M58 200L90 205L118 213L142 219L178 222L205 224M92 220L118 228L140 235L170 238L200 240M85 130L110 138L140 148L170 155M70 142L66 200M90 140L86 205M108 135L106 168L102 215M118 140L114 180L112 225M128 138L125 172L122 228M136 145L134 185L130 240M144 140L145 185L142 240L138 268M153 142L154 190L152 250M162 145L162 185L165 240M170 152L172 190L175 240M180 155L180 205L186 240L182 268M190 165L190 210L196 240M200 168L200 215L208 235L200 268M212 165L212 208L205 224M105 152L130 158M103 178L130 192M148 158L180 164M150 176L190 181M152 195L200 198M145 212L190 214M92 185L112 190M120 200L140 210M75 200L80 228M62 190L70 218M52 205L65 200L84 212M98 235L110 228L125 250L105 262M110 240L138 252L165 248L185 258M125 250L120 268M150 250L155 268M205 245L210 268' },
  { at: 'translate(365 350) scale(.33333)', d: 'M98 20L120 22L150 25L180 28L208 35L228 45M92 35L110 45L130 42L160 48L190 42L228 48M90 50L112 58L138 62L170 60L200 55M98 68L120 72L145 78L160 76M92 85L110 82L130 92L158 95M100 97L120 100L145 108L160 106M105 110L118 118L140 122L165 125M105 18L115 40L108 60L120 72L115 95L122 118M125 10L122 35L135 55L130 75L138 90L130 112L128 135M142 15L148 40L142 62L155 78L145 95L148 122M160 20L165 45L158 62L163 80L155 95L162 125M178 20L182 45L175 60L185 78L192 100L188 118L165 125M195 15L200 45L208 55L205 72L185 75M212 20L208 40L228 48M205 72L230 70M185 78L205 85L230 85M188 95L215 92L228 100M192 108L215 105L222 112M208 55L230 62M118 118L125 150M125 145L145 132L140 122M148 122L145 145L152 172M165 125L172 150L168 175L150 178L128 190M188 118L192 125L182 148L170 172M188 118L215 120L218 138L202 152L198 170L168 175M218 138L242 138L243 160M220 112L215 120M202 152L195 140L192 125M198 170L202 190M230 10L235 35L248 25L262 35M245 0L248 25M265 0L270 30M235 15L270 18M100 18L98 68M110 55L100 97' },
  { at: 'translate(385 410) scale(.33333)', d: 'M75 20L105 22L137 8M94 62L115 57L133 64L140 42L149 30M133 64L143 72L153 70L162 84L176 112L184 148L163 157M149 30L143 50L157 48L165 52L183 62L168 68L162 84M157 48L160 66L168 68M165 52L168 68M162 84L175 96L205 97L233 109M184 148L218 162M184 148L203 173L196 188L183 200L187 218L172 230L170 256L163 258' },
];

export default function App() {
  return (
    <div className="flex h-[544px] w-[709px] flex-col overflow-hidden bg-[#f0f0f0] font-['Liberation_Sans','Noto_Sans_CJK_JP',sans-serif] text-[8px] leading-none text-[#111]">
      <header className="flex h-[12px] shrink-0 items-start bg-[linear-gradient(100deg,#3c70bd_0%,#1454ad_18%,#1250a8_40%,#1c59b1_46%,#0f4da7_55%,#1351aa_78%,#6d92c5_100%)]">
        <span className="flex h-[12px] items-center pl-[1px]">
          <svg viewBox="0 0 9 9" className="size-[9px]">
            <path d="M1 7Q0 2 4 2L3 8z" fill="#8fc13d" />
            <path d="M4 3l4-2l-2 5l-2 2.500z" fill="#e4d83c" />
            <path d="M2 4l3 2" stroke="#fff" strokeWidth=".7" />
          </svg>
        </span>
        <Fit className="ml-[1.5px] w-[53px] font-['DejaVu_Sans',sans-serif] text-[8px] leading-[11px] text-[#0c1522]">QGIS2.8.2-Wien</Fit>
        <div className="ml-auto mr-[1.5px] flex h-[9px] overflow-hidden rounded-b-[2px] border border-t-0 border-[#415a80]">
          <span className="flex w-[14.5px] items-center justify-center border-r border-[#5c7298] bg-gradient-to-b from-[#a7bad5] to-[#53749f]"><span className="mt-[2px] h-[2px] w-[6px] bg-white" /></span>
          <span className="flex w-[14.5px] items-center justify-center border-r border-[#5c7298] bg-gradient-to-b from-[#a7bad5] to-[#53749f]"><svg viewBox="0 0 6 6" className="size-[6px]"><path d="M2 2V.700h3.300v3H4M.700 2.200H4v3H.700z" fill="none" stroke="#fff" /></svg></span>
          <span className="flex w-[26px] items-center justify-center bg-gradient-to-b from-[#d9988e] via-[#c2402f] to-[#b13527]"><svg viewBox="0 0 6 6" className="size-[6px]"><path d="M.800 .800l4.400 4.400M5.200 .800L.800 5.200" stroke="#fff" strokeWidth="1.500" /></svg></span>
        </div>
      </header>

      <nav className="flex h-[12px] shrink-0 items-center bg-gradient-to-b from-[#f8f8f8] to-[#ededed] pl-[5px] text-[7.5px] leading-[11px]">
        {menus.map(([t, k, w]) => (
          <Fit key={t} className={w}>
            {t}{k && <>(<u className="underline-offset-1">{k}</u>)</>}
          </Fit>
        ))}
      </nav>

      <div className="flex h-[21.5px] shrink-0 items-center border-t border-[#dadada]">
        <Grip className="w-[6.3px]" />
        <Row list="new open save saveAs composer manager" />
        <Grip className="w-[8.6px]" />
        <Row list="touch hand panSel zoomIn zoomOut zoomNative zoomFull zoomSel zoomLayer zoomLast zoomNext refresh" />
        <Grip className="w-[7.6px]" />
        <Row list="info action" /><Arrow faint /><Row list="select" /><Arrow />
        <Row list="deselect expr table calc measure" /><Arrow />
        <Row list="tips bmNew bm annot" /><Arrow />
        <Grip className="w-[6px]" />
        <Row list="help whats" />
      </div>
      <div className="flex h-[21.5px] shrink-0 items-center border-t border-[#dadada]">
        <Grip className="w-[6.3px]" />
        <Row list="edits pencil saveOff addF moveF node trash cut copy paste" />
        <Grip className="w-[8px]" />
        <Row list="abcY abcPic abcPin abcEye abcMove abcRot abcEdit" />
        <Grip className="w-[7.5px]" />
        <Row list="gps csw" />
        <Grip className="w-[8px]" />
        <Row list="python binoc infoFaint" />
        <Grip className="w-[8.5px]" />
        <Row list="cross person sat vy blue spiral" />
      </div>
      <div className="flex h-[21.5px] shrink-0 items-center border-t border-[#dadada]">
        <Grip className="w-[6.3px]" />
        <Row list="lib1 lib2 lib3" />
        <span className="mr-[1px] h-[16px] w-px bg-[#ccc]" />
        <Row list="meshG meshB mesh1 mesh2 tools mesh3 mesh4" />
        <Grip className="w-[7.3px]" />
        <Row list="vect rast pg feather mssql ora ora2 wms wcs wfs comma vect2" /><Arrow /><Row list="box" />
      </div>

      <main className="flex min-h-0 flex-1 border-t border-[#d2d2d2]">
        <aside className="flex w-[160px] shrink-0 flex-col">
          <div className="flex h-[10px] items-center pr-[1px]">
            <svg className="h-[4px] w-[60px]"><path d="M1 1h59M2.500 3h58" stroke="#cfcfcf" strokeDasharray="1 2" /></svg>
            <Fit className="ml-[5px] w-[12.5px] text-[7.5px] leading-[9px]">レイヤ</Fit>
            <svg className="ml-[4px] h-[4px] w-[60px]"><path d="M1 1h59M2.500 3h58" stroke="#cfcfcf" strokeDasharray="1 2" /></svg>
            <span className="ml-auto flex h-[8px] gap-px">
              <span className="flex w-[8px] items-center justify-center border border-[#999] bg-[#f5f5f5]"><svg viewBox="0 0 6 6" className="size-[5px]"><path d="M2 2V.700h3.300v3H4M.700 2.200H4v3H.700z" fill="none" stroke="#222" /></svg></span>
              <span className="flex w-[8px] items-center justify-center border border-[#999] bg-[#f5f5f5]"><svg viewBox="0 0 6 6" className="size-[5px]"><path d="M.800 .800l4.400 4.400M5.200 .800L.800 5.200" stroke="#222" strokeWidth="1.300" /></svg></span>
            </span>
          </div>
          <div className="flex h-[17.500px] items-center gap-[2px] pb-[2px] pl-[1px]">
            {['pAdd', 'eye', 'funnel', 'expand', 'collapse', 'remove'].map((n) => <Svg key={n} n={n} />)}
          </div>
          <div className="flex-1 border border-[#6db3fa] bg-white">
            {layers.map((l, i) => (
              <div key={i} className={l.on ? 'flex h-[9px] items-center bg-[#3399ff] text-white' : 'flex h-[9px] items-center text-black'}>
                <svg viewBox="0 0 12 9" className="ml-[1px] h-[9px] w-[12px]"><path d={i < 3 ? 'M5.500 0v9M5.500 4.500H12' : 'M5.500 0v4.500H12'} fill="none" stroke="#b5b5b5" strokeWidth=".8" /></svg>
                <Check />
                <span className={`ml-[3.5px] h-[9px] w-[9px] border-[0.5px] border-[#555] ${l.color}`} />
                <Fit className={`ml-[2.5px] font-['DejaVu_Sans_Mono',monospace] text-[7.5px] font-bold leading-[9px] ${l.box} ${l.on ? 'underline' : ''}`}>{l.name}</Fit>
              </div>
            ))}
          </div>
        </aside>
        <section className="ml-[3px] flex-1 border border-[#c6c6c6] bg-white">
          <svg viewBox="164 90 544 437" className="block h-[437px] w-[544px]">
            <path d={outline} fill="#5cc8ce" stroke="#35595c" strokeWidth=".9" strokeLinejoin="round" />
            {sheets.map((s, i) => (
              <path key={i} transform={s.at} d={s.d} fill="none" stroke="#193f43" strokeOpacity=".9" strokeWidth="2.400" strokeLinejoin="round" />
            ))}
          </svg>
        </section>
      </main>

      <footer className="flex h-[16.5px] shrink-0 items-center pl-[3px] text-[7.5px] leading-[11px]">
        <Fit className="w-[102px]">カレントレイヤの編集モードを切り替える</Fit>
        <Fit className="ml-[40.5px] w-[96px] text-[#1414f0] underline">更新されたプラグインが使用可能です</Fit>
        <span className="ml-[5.5px] flex size-[11px] shrink-0 items-center justify-center rounded-[1px] border border-[#999] bg-[#e4e4e4]">
          <svg viewBox="0 0 10 10" className="size-[9px]"><circle cx="3.500" cy="3.500" r="2" fill="#aaa" stroke="#444" /><circle cx="6.500" cy="6.500" r="2" fill="#aaa" stroke="#444" /><path d="M1 7l3 2M6 1l2 2" stroke="#555" /></svg>
        </span>
        <Fit className="ml-[5px] w-[14px]">座標</Fit>
        <span className="ml-[6px] flex h-[11px] w-[166px] shrink-0 items-center justify-center border border-[#bdbdbd] bg-white"><Fit className="w-[37px]">14493,-13333</Fit></span>
        <Fit className="ml-[5px] w-[13.5px]">縮尺</Fit>
        <span className="ml-[4.5px] flex h-[11px] w-[46px] shrink-0 items-center justify-between border border-[#bdbdbd] bg-white pl-[2px]">
          <Fit className="w-[25.5px]">1:208,725</Fit>
          <span className="flex h-full w-[9px] items-center justify-center border-l border-[#ccc] bg-[#f0f0f0]"><svg viewBox="0 0 5 3" className="h-[3px] w-[5px]"><path d="M0 0h5L2.500 3z" fill="#111" /></svg></span>
        </span>
        <Fit className="ml-[5px] w-[14px]">回転</Fit>
        <span className="ml-[5.5px] flex h-[13px] w-[54.5px] shrink-0 items-center justify-between border border-[#bdbdbd] bg-white pl-[2px]">
          <Fit className="w-[8px]">0.0</Fit>
          <span className="flex h-full w-[8px] flex-col items-center justify-around border-l border-[#ccc] bg-[#f0f0f0]">
            <svg viewBox="0 0 5 3" className="h-[3px] w-[5px]"><path d="M0 3h5L2.500 0z" fill="#111" /></svg>
            <svg viewBox="0 0 5 3" className="h-[3px] w-[5px]"><path d="M0 0h5L2.500 3z" fill="#111" /></svg>
          </span>
        </span>
        <span className="ml-[4px]"><Check /></span>
        <Fit className="ml-[3.5px] w-[14.5px]">レンダ</Fit>
        <svg viewBox="0 0 10 10" className="ml-[9.5px] size-[9px] shrink-0"><circle cx="5" cy="5" r="3.400" fill="#eee" stroke="#8d8d8d" strokeWidth="1.500" /><path d="M5 0v3M5 7v3M0 5h3M7 5h3" stroke="#999" strokeWidth=".8" /></svg>
        <Fit className="ml-[2px] w-[30.5px]">EPSG:2450</Fit>
        <svg viewBox="0 0 10 9" className="ml-[13px] h-[9px] w-[10px] shrink-0"><path d="M5 .500c6 0 5.500 6 2.500 6.500l1 1.700L5 7.300C-.5 7.500-1 .500 5 .500z" fill="#666" /></svg>
      </footer>
    </div>
  );
}
